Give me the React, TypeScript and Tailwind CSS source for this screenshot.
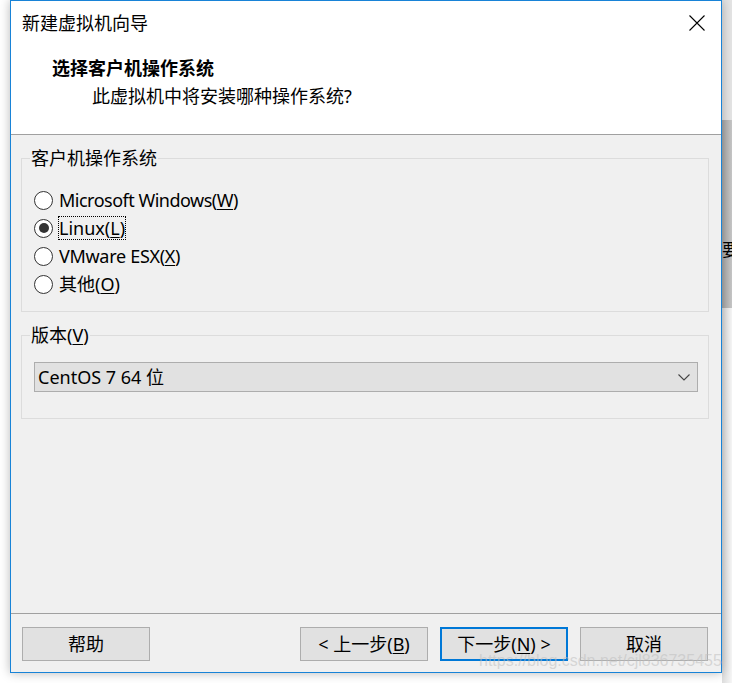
import React from "react";

function Radio({ checked }: { checked?: boolean }) {
  return (
    <span className="flex h-[19px] w-[19px] shrink-0 items-center justify-center rounded-full border border-[#333333] bg-white">
      {checked ? <span className="h-[10px] w-[10px] rounded-full bg-[#333333]" /> : null}
    </span>
  );
}

function RadioRow({ checked, focused, children }: { checked?: boolean; focused?: boolean; children: React.ReactNode }) {
  return (
    <div className="flex h-[28px] items-center">
      <Radio checked={checked} />
      <span
        className={
          focused
            ? "ml-[5px] flex h-[24px] items-center border border-dotted border-black px-[0px] leading-none"
            : "ml-[5px] flex h-[24px] items-center border border-transparent px-[0px] leading-none"
        }
      >
        {children}
      </span>
    </div>
  );
}

function Btn({ children, primary }: { children: React.ReactNode; primary?: boolean }) {
  return (
    <div
      className={
        primary
          ? "flex h-[34px] w-[128px] items-center justify-center border-2 border-[#0078d7] bg-[#e1e1e1] text-[18px] leading-none text-black"
          : "flex h-[34px] w-[128px] items-center justify-center border border-[#adadad] bg-[#e1e1e1] text-[18px] leading-none text-black"
      }
    >
      {children}
    </div>
  );
}

export default function App() {
  return (
    <div className="relative h-[683px] w-[732px] overflow-hidden bg-white font-['Noto_Sans','Noto_Sans_CJK_SC',sans-serif] text-[18px] text-black">
      {/* desktop behind the dialog on the right */}
      <div className="absolute left-[722px] top-0 flex h-full w-[10px] flex-col">
        <div className="h-[120px] bg-[#e4e4e4]" />
        <div className="relative h-[188px] overflow-hidden bg-gradient-to-r from-[#a9a9a9] to-[#c6c6c6]">
          <span className="absolute left-[0px] top-[121px] text-[17px] leading-none text-black">要</span>
        </div>
        <div className="flex-1 bg-gradient-to-r from-[#dddddd] to-[#f6f6f6]" />
      </div>

      <div className="pl-[10px]">
        <div className="relative z-10 flex h-[673px] w-[712px] flex-col border border-[#1883d7] bg-[#f0f0f0] shadow-[0_0_10px_rgba(0,0,0,0.28)]">
          {/* header */}
          <div className="h-[134px] shrink-0 border-b border-[#a0a0a0] bg-white">
            <div className="flex items-start justify-between pl-[11px] pr-[16px] pt-[10px]">
              <div className="leading-[24px]">新建虚拟机向导</div>
              <svg className="mt-[4px]" width="16" height="16" viewBox="0 0 16 16">
                <path d="M0.5 0.5 L15.5 15.5 M15.5 0.5 L0.5 15.5" stroke="#000" strokeWidth="1.1" fill="none" />
              </svg>
            </div>
            <div className="pl-[41px] pt-[21px] font-bold leading-[24px]">选择客户机操作系统</div>
            <div className="pl-[81px] pt-[4px] leading-[24px]">此虚拟机中将安装哪种操作系统?</div>
          </div>

          {/* body */}
          <div className="flex-1 pl-[10px] pr-[12px]">
            <div className="relative mt-[23px] h-[154px] border border-[#dcdcdc]">
              <div className="absolute left-[8px] top-[-13px] bg-[#f0f0f0] px-[1px] leading-[24px]">客户机操作系统</div>
              <div className="flex flex-col pl-[12px] pt-[27px]">
                <RadioRow>
                  <span className="tracking-[-0.5px]">
                    Microsoft Windows(<span className="underline underline-offset-2">W</span>)
                  </span>
                </RadioRow>
                <RadioRow checked focused>
                  Linux(<span className="underline underline-offset-2">L</span>)
                </RadioRow>
                <RadioRow>
                  <span className="tracking-[-0.3px]">
                    VMware ESX(<span className="underline underline-offset-2">X</span>)
                  </span>
                </RadioRow>
                <RadioRow>
                  其他(<span className="underline underline-offset-2">O</span>)
                </RadioRow>
              </div>
            </div>

            <div className="relative mt-[23px] h-[84px] border border-[#dcdcdc]">
              <div className="absolute left-[8px] top-[-13px] bg-[#f0f0f0] px-[1px] leading-[24px]">
                版本(<span className="underline underline-offset-2">V</span>)
              </div>
              <div className="ml-[12px] mr-[10px] mt-[26px] flex h-[30px] items-center justify-between border border-[#adadad] bg-[#e1e1e1] pl-[3px] pr-[7px]">
                <span className="leading-none">CentOS 7 64 位</span>
                <svg width="12" height="7" viewBox="0 0 12 7">
                  <path d="M0.5 0.5 L6 6 L11.5 0.5" stroke="#444" strokeWidth="1.1" fill="none" />
                </svg>
              </div>
            </div>
          </div>

          {/* footer */}
          <div className="h-[59px] shrink-0 border-t border-[#a0a0a0] pl-[11px] pr-[13px] pt-[13px]">
            <div className="flex items-center justify-between">
              <Btn>帮助</Btn>
              <div className="flex gap-[12px]">
                <Btn>
                  &lt; 上一步(<span className="underline underline-offset-2">B</span>)
                </Btn>
                <Btn primary>
                  下一步(<span className="underline underline-offset-2">N</span>) &gt;
                </Btn>
                <Btn>取消</Btn>
              </div>
            </div>
          </div>
        </div>
      </div>

      {/* watermark */}
      <div className="pointer-events-none absolute left-[479px] top-[651px] z-20 whitespace-nowrap font-['Liberation_Sans',sans-serif] text-[16px] leading-[20px] text-[rgba(190,190,190,0.55)]">
        https://blog.csdn.net/cjl836735455
      </div>
    </div>
  );
}
